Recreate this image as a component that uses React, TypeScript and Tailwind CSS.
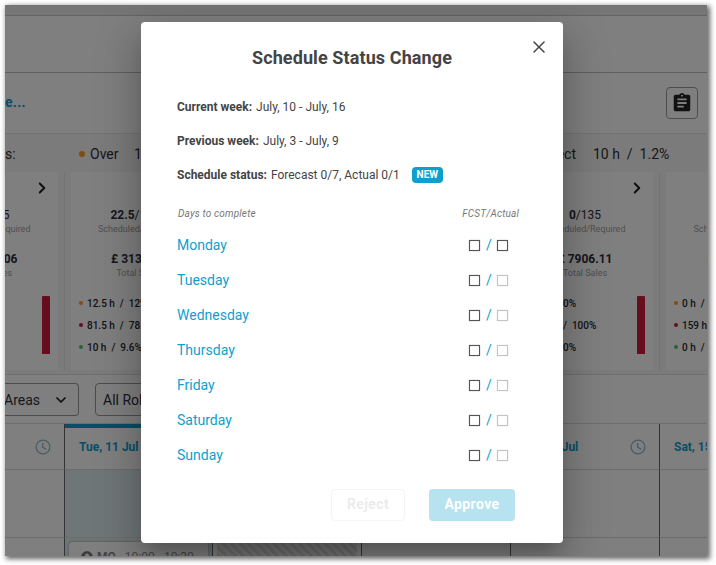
import { ChevronDown, ChevronRight, X } from "lucide-react"
import { MdAssignment, MdAccountCircle } from "react-icons/md"
import clsx from "clsx"

interface DaySummary {
  id: string
  label: string
  scheduled: string
  required: string
  sales: string
  over: string
  under: string
  perfect: string
  active?: boolean
}

const summaries: DaySummary[] = [
  { id: "mon", label: "Mon, 10 Jul", scheduled: "22", required: "125", sales: "£ 4210.06", over: "0 h / 0%", under: "9 h / 9%", perfect: "0 h / 0%" },
  { id: "tue", label: "Tue, 11 Jul", scheduled: "22.5", required: "1045", sales: "£ 3134.20", over: "12.5 h  /  12%", under: "81.5 h  /  78.4%", perfect: "10 h  /  9.6%", active: true },
  { id: "wed", label: "Wed, 12 Jul", scheduled: "0", required: "120", sales: "£ 3520.40", over: "0 h  /  0%", under: "120 h  /  100%", perfect: "0 h  /  0%" },
  { id: "thu", label: "Thu, 13 Jul", scheduled: "0", required: "128", sales: "£ 4105.75", over: "0 h  /  0%", under: "128 h  /  100%", perfect: "0 h  /  0%" },
  { id: "fri", label: "Fri, 14 Jul", scheduled: "0", required: "135", sales: "£ 7906.11", over: "0 h  /   0%", under: "135 h  /  100%", perfect: "0 h  /   0%" },
  { id: "sat", label: "Sat, 15 Jul", scheduled: "0", required: "159", sales: "£ 9120.35", over: "0 h  /  0%", under: "159 h  /  100%", perfect: "0 h  /  0%" },
]

const days = ["Monday", "Tuesday", "Wednesday", "Thursday", "Friday", "Saturday", "Sunday"]

const weekGrid = "grid grid-cols-[149px_148px_149px_149px_149px_149px] w-[893px] -ml-[89px]"

function ClockIcon() {
  return (
    <svg className="w-4 h-4 text-[#8fb9c6]" viewBox="0 0 16 16" fill="none" stroke="currentColor" strokeWidth="1.3">
      <circle cx="8" cy="8" r="6.9" />
      <path d="M7.7 4v4.3l3.6 1.9" />
    </svg>
  )
}

function StatLine({ color, text }: { color: string; text: string }) {
  return (
    <div className="flex items-center h-[22px] gap-1 text-[10px] font-medium whitespace-pre">
      <span className={clsx("w-1 h-1 rounded-full shrink-0", color)} />
      {text}
    </div>
  )
}

function SummaryCard({ day }: { day: DaySummary }) {
  return (
    <div className="border-r border-[#e6e6e6] pl-1.5 pr-1.5 h-[198px]">
      <div className="h-full bg-white">
        <div className="flex justify-end pt-[7px] pr-[7px] h-[34px]">
          <ChevronRight className="w-[18px] h-[18px] text-[#1c1c1c]" strokeWidth={2.6} />
        </div>
        <div className="text-center text-xs leading-[18px] text-[#2f2f38]">
          <b className="font-bold">{day.scheduled}</b>/{day.required}
        </div>
        <div className="text-center text-[9px] leading-[11px] text-[#a0a0a0]">Scheduled/Required</div>
        <div className="mt-[15px] text-center text-xs leading-[18px] font-bold text-[#2f2f38]">{day.sales}</div>
        <div className="text-center text-[9px] leading-[11px] text-[#a0a0a0]">Total Sales</div>
        <div className="flex justify-between mt-[13px] pl-2 pr-2 text-[#26262e]">
          <div>
            <StatLine color="bg-[#ff9d1e]" text={day.over} />
            <StatLine color="bg-[#cf1d3c]" text={day.under} />
            <StatLine color="bg-[#4fc27f]" text={day.perfect} />
          </div>
          <div className="w-2 h-[58px] mt-1 shrink-0 rounded-t-[1px] bg-[#cf1d3c]" />
        </div>
      </div>
    </div>
  )
}

function SchedulePage() {
  return (
    <div className="w-[702px] h-[551px] overflow-hidden bg-white text-[#2f2f38]">
      <div className="h-[11px] bg-[#ededed] border-b border-[#c8c8c8]" />
      <div className="h-[57px] border-b border-[#bcbcbc]" />
      <div className="flex items-center justify-between h-[61px] border-b border-[#e6e6e6] pr-[9px]">
        <span className="pb-0.5 text-sm font-bold tracking-[0.3px] text-[#0f9fcc]">e...</span>
        <div className="flex items-center justify-center w-8 h-8 rounded border border-[#9b9b9b]">
          <MdAssignment className="w-[22px] h-[22px] text-[#222]" />
        </div>
      </div>

      <div className="flex items-center h-[38px] pt-px bg-[#f7f7f7] text-sm whitespace-pre">
        <span className="w-[74px]">s:</span>
        <span className="w-1.5 h-1.5 mr-[5px] rounded-full bg-[#ff9d1e]" />
        <span className="w-11">Over</span>
        <span>12.5 h  /  1.5%</span>
        <span className="ml-auto">Perfect</span>
        <span className="ml-[17px] w-[114px]">10 h  /  1.2%</span>
      </div>
      <div className="h-[203px] bg-[#f7f7f7] border-b border-[#e0e0e0] overflow-hidden">
        <div className={weekGrid}>
          {summaries.map((day) => (
            <SummaryCard key={day.id} day={day} />
          ))}
        </div>
      </div>

      <div className="flex items-start gap-4 h-[49px] pt-2 border-b border-[#dcdcdc] text-sm">
        <div className="flex items-center justify-between w-[75px] h-[33px] pr-2 -ml-px rounded-r border border-l-0 border-[#9b9b9b]">
          <span>Areas</span>
          <ChevronDown className="w-4 h-4 mr-px text-[#1c1c1c]" strokeWidth={2.6} />
        </div>
        <div className="flex items-center w-[110px] h-[33px] pl-[7px] rounded border border-[#9b9b9b]">All Roles</div>
      </div>

      <div className={weekGrid}>
        {summaries.map((day) => (
          <div
            key={day.id}
            className={clsx(
              "flex items-center justify-between h-[46px] pl-3.5 pr-[13px] border-r border-r-[#666] border-b border-b-[#d8d8d8]",
              day.active && "shadow-[inset_0_4px_0_#0f9fcc]"
            )}
          >
            <span className="text-xs font-bold text-[#0f9fcc]">{day.label}</span>
            <ClockIcon />
          </div>
        ))}
      </div>
      <div className={weekGrid}>
        {summaries.map((day) => (
          <div
            key={day.id}
            className={clsx("h-[68px] border-r border-r-[#666] border-b border-b-[#d8d8d8]", day.active && "bg-[#deecf1]")}
          />
        ))}
      </div>
      <div className={weekGrid}>
        {summaries.map((day) => (
          <div
            key={day.id}
            className={clsx("h-10 pt-1 px-1 border-r border-[#666] overflow-hidden", day.active && "bg-[#deecf1]")}
          >
            {day.id === "tue" && (
              <div className="flex items-center gap-[3px] h-9 pl-[11px] pb-1.5 rounded bg-white shadow-[0_0_3px_#999] text-xs text-[#8a8a8a]">
                <MdAccountCircle className="w-3.5 h-3.5 text-[#777]" />
                <b>MO</b>
                <span className="ml-1.5">10:00 - 10:30</span>
              </div>
            )}
            {day.id === "wed" && (
              <div className="h-9 bg-[repeating-linear-gradient(45deg,#ececec_0_3px,#d8d8d8_3px_6px)]" />
            )}
          </div>
        ))}
      </div>
    </div>
  )
}

function Checkbox({ disabled }: { disabled?: boolean }) {
  return (
    <span
      className={clsx(
        "w-[11px] h-[11px] mt-0.5 border",
        disabled
          ? "border-[#c4c4c4] shadow-[0_0_1px_#ccc,inset_0_0_1px_#ddd]"
          : "border-[#555] shadow-[0_0_1px_#999,inset_0_0_1px_#aaa]"
      )}
    />
  )
}

function StatusDialog() {
  return (
    <div className="absolute left-[141px] top-[22px] w-[422px] h-[521px] rounded bg-white text-[#444] shadow-[0_11px_15px_-7px_rgba(0,0,0,0.2),0_24px_38px_3px_rgba(0,0,0,0.14),0_9px_46px_8px_rgba(0,0,0,0.12)]">
      <button className="absolute right-3.5 top-[15px]">
        <X className="w-5 h-5" strokeWidth={1.8} />
      </button>
      <h2 className="pt-6 text-center text-lg leading-6 font-bold tracking-[0.1px]">Schedule Status Change</h2>

      <div className="pl-9 pr-12 mt-5 text-xs">
        <p className="flex items-center gap-1 h-[34px]">
          <b>Current week:</b>
          <span>July, 10 - July, 16</span>
        </p>
        <p className="flex items-center gap-1 h-[34px]">
          <b>Previous week:</b>
          <span>July, 3 - July, 9</span>
        </p>
        <p className="flex items-center gap-1 h-[34px]">
          <b>Schedule status:</b>
          <span>Forecast 0/7, Actual 0/1</span>
          <span className="flex items-center justify-center ml-2 w-[31px] h-4 rounded bg-[#0f9fcc] text-[10px] font-bold text-white">
            NEW
          </span>
        </p>
      </div>

      <div className="flex justify-between pl-[37px] pr-11 mt-[15px] text-[10px] leading-[14px] italic tracking-[0.17px] text-[#777]">
        <span>Days to complete</span>
        <span>FCST/Actual</span>
      </div>
      <ul className="mt-1.5 pl-9 pr-[55px] text-sm text-[#0f9fcc]">
        {days.map((day, index) => (
          <li key={day} className="flex items-center justify-between h-[35px]">
            <span>{day}</span>
            <span className="flex items-center">
              <Checkbox />
              <span className="w-[17px] pl-px text-center">/</span>
              <Checkbox disabled={index > 0} />
            </span>
          </li>
        ))}
      </ul>

      <div className="flex justify-end gap-6 pr-12 mt-[17px] text-sm font-bold tracking-[0.4px]">
        <button className="w-[74px] h-8 pb-0.5 rounded border border-[#f4f4f4] text-[#ececec]">Reject</button>
        <button className="w-[86px] h-8 pb-0.5 rounded bg-[#b7e2ef] text-white">Approve</button>
      </div>
    </div>
  )
}

export default function App() {
  return (
    <div className="relative w-[716px] h-[565px] overflow-hidden bg-white p-[5px] font-['Roboto',sans-serif]">
      <div className="relative w-[702px] h-[551px] shadow-[2px_2px_5px_1px_rgba(0,0,0,0.6)]">
        <SchedulePage />
        {/* Backdrop; clips the dialog shadow to the page */}
        <div className="absolute inset-0 overflow-hidden bg-black/50">
          <div className="absolute -left-[5px] -top-[5px]">
            <StatusDialog />
          </div>
        </div>
      </div>
    </div>
  )
}
